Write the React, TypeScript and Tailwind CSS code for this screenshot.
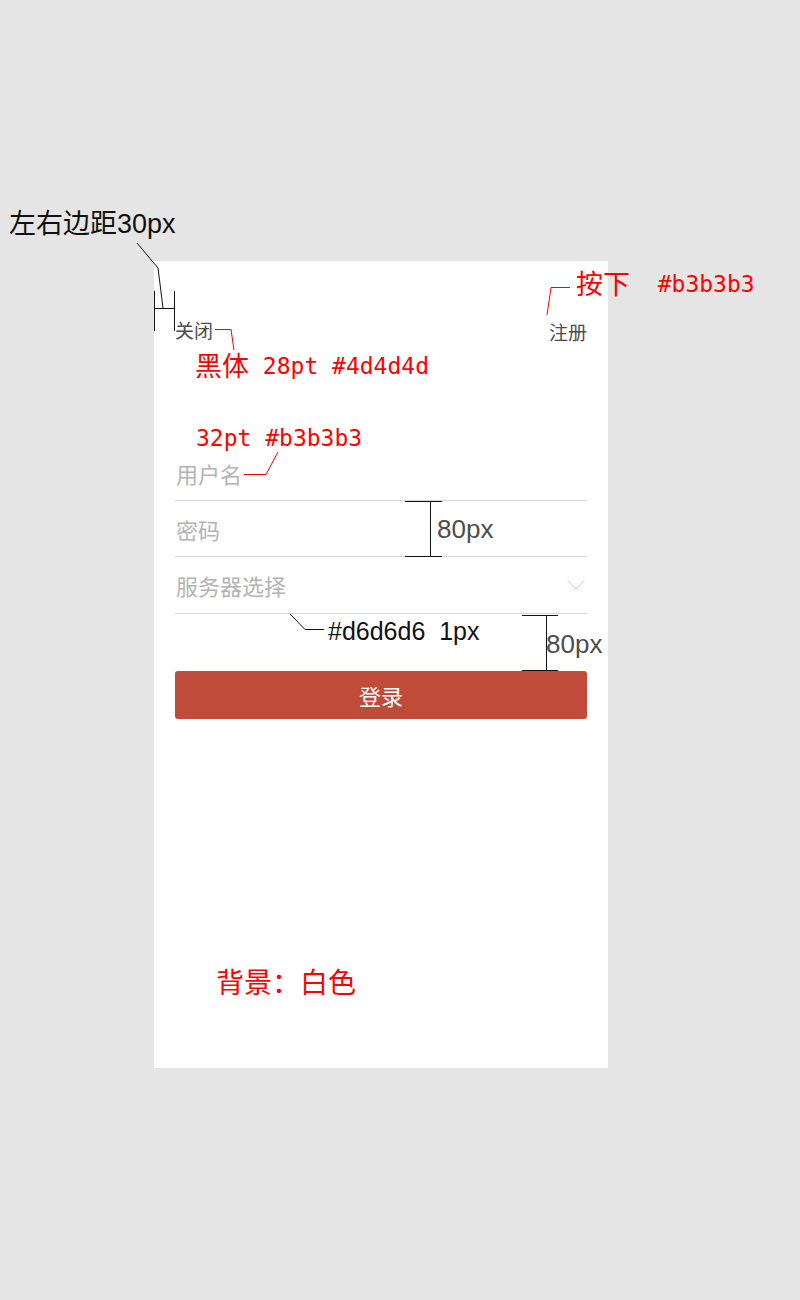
import React from "react";

const cjk = { fontFamily: '"Noto Sans CJK SC", "Noto Sans", sans-serif' };
const mono = { fontFamily: '"DejaVu Sans Mono", "Noto Sans CJK SC", monospace' };
const sans = { fontFamily: '"Liberation Sans", "Noto Sans CJK SC", sans-serif' };

function Field({ label, chevron, tall }: { label: string; chevron?: boolean; tall?: boolean }) {
  return (
    <div className={`flex items-center justify-between border-b border-[#d6d6d6] ${tall ? "h-[57px]" : "h-[56px]"}`}>
      <span className="pl-[1px] text-[22px] leading-none text-[#b3b3b3]">{label}</span>
      {chevron && (
        <svg width="18" height="12" viewBox="0 0 18 12" className="mr-[2px]">
          <polyline points="1,1.5 9,10 17,1.5" fill="none" stroke="#c4c4c4" strokeWidth="1" />
        </svg>
      )}
    </div>
  );
}

// red spec note: CJK part wider, latin part monospace
function Note({ zh, en, className }: { zh?: string; en: string; className: string }) {
  return (
    <div className={`absolute flex items-end whitespace-pre leading-none text-[#ff0000] ${className}`} style={mono}>
      {zh && <span className="text-[27px] leading-none" style={cjk}>{zh}</span>}
      <span className="text-[23px] leading-none">{en}</span>
    </div>
  );
}

export default function App() {
  return (
    <div className="relative w-[800px] h-[1300px] bg-[#e5e5e5] overflow-hidden pl-[154px] pt-[261px]" style={cjk}>
      {/* phone screen */}
      <div className="w-[454px] h-[807px] bg-white px-[21px]">
        <div className="flex justify-between pt-[57px] text-[19px] leading-[24px] text-[#4d4d4d]">
          <span>关闭</span>
          <span className="mt-[2px]">注册</span>
        </div>

        <div className="mt-[101px]">
          <Field label="用户名" />
          <Field label="密码" />
          <Field label="服务器选择" chevron tall />
        </div>

        <button className="mt-[57px] flex h-[48px] w-full items-center justify-center rounded-[3px] bg-[#c04b3a] text-[22px] text-white">
          登录
        </button>
      </div>

      {/* annotations */}
      <div className="absolute left-[9px] top-[211px] text-[27px] leading-none text-[#111]" style={sans}>
        左右边距30px
      </div>
      <Note zh="按下" en="  #b3b3b3" className="left-[576px] top-[269px]" />
      <Note zh="黑体" en=" 28pt #4d4d4d" className="left-[195px] top-[351px]" />
      <Note en="32pt #b3b3b3" className="left-[196px] top-[427px]" />
      <div className="absolute left-[437px] top-[516px] text-[26px] leading-none text-[#4d4d4d]" style={sans}>
        80px
      </div>
      <div className="absolute left-[328px] top-[619px] text-[25px] leading-none text-[#111] whitespace-pre" style={sans}>
        #d6d6d6  1px
      </div>
      <div className="absolute left-[546px] top-[631px] text-[26px] leading-none text-[#4d4d4d]" style={sans}>
        80px
      </div>
      <div className="absolute left-[216px] top-[967px] text-[28px] leading-none text-[#ff0000]" style={cjk}>
        背景：白色
      </div>

      {/* leader lines and dimension marks */}
      <svg className="absolute left-0 top-0 pointer-events-none" width="800" height="1300">
        <g stroke="#111" strokeWidth="1" fill="none">
          <polyline points="137,243 158,268 163,308" />
          <line x1="154.5" y1="291" x2="154.5" y2="331" />
          <line x1="174.5" y1="291" x2="174.5" y2="331" />
          <line x1="154" y1="308.5" x2="175" y2="308.5" />

          <line x1="430.5" y1="501" x2="430.5" y2="556" />
          <line x1="405" y1="501.5" x2="442" y2="501.5" />
          <line x1="405" y1="556.5" x2="442" y2="556.5" />

          <polyline points="290,614 305,629.5 324,629.5" />

          <line x1="546.5" y1="615" x2="546.5" y2="670" />
          <line x1="522" y1="615.5" x2="558" y2="615.5" />
          <line x1="522" y1="670.5" x2="558" y2="670.5" />
        </g>
        <g stroke="#ff0000" strokeWidth="1" fill="none">
          <polyline points="215,329.5 231,329.5 234,350" />
          <polyline points="244,474.5 266,474.5 278,452" />
          <polyline points="570,287.5 551,287.5 547,315" />
        </g>
      </svg>
    </div>
  );
}
